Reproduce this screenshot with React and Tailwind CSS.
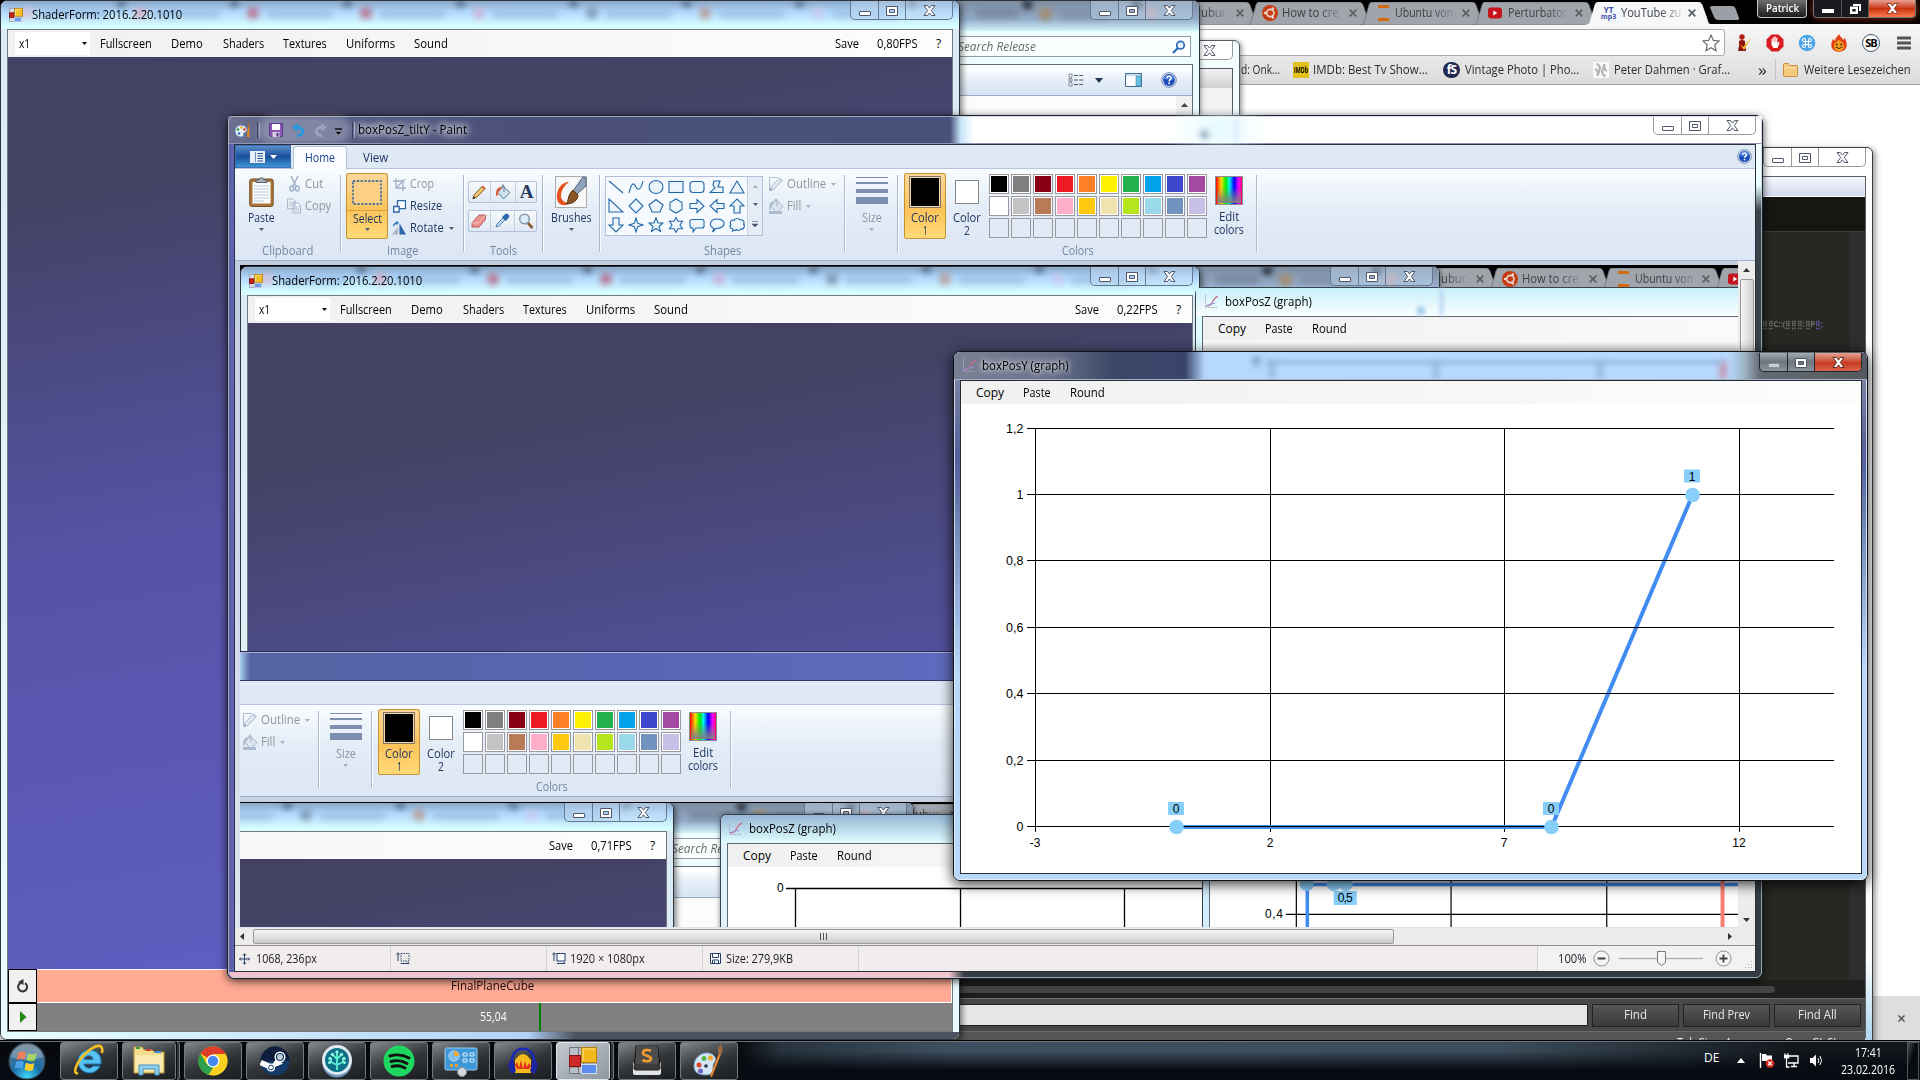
import React, { useLayoutEffect, useRef, useState } from "react";

/* Text squeezed or stretched to a given advance width. */
function T({ w, children, className = "" }) {
  const ref = useRef(null);
  const [s, setS] = useState(1);
  useLayoutEffect(() => {
    const n = ref.current.offsetWidth;
    if (n) setS(w / n);
  }, [w, children]);
  return (
    <span className={"inline-block shrink-0 whitespace-nowrap " + className} style={{ width: w }}>
      <span ref={ref} className="inline-block origin-left" style={{ transform: `scaleX(${s})` }}>
        {children}
      </span>
    </span>
  );
}

function Arrow({ className = "text-[#4a5b78]" }) {
  return (
    <svg className={"shrink-0 " + className} width="5" height="3" viewBox="0 0 5 3">
      <path d="M0 0h5L2.5 3z" fill="currentColor" />
    </svg>
  );
}

const glyphX = "M1 0h3.4L6.5 2.6 8.600 0H12L8.300 5 12 10H8.600L6.500 7.400 4.400 10H1l3.700-5z";

function WinButtons({ red = false, plain = false, className = "" }) {
  const box = plain
    ? "border-[#9a9a9a] bg-white"
    : red
    ? "border-[#20262e] bg-linear-to-b from-[#a3abb3] via-[#6d757d] to-[#8d969e]"
    : "border-[#65788f] bg-[#c4dbf2]/45";
  return (
    <div className={"flex h-[19px] w-[103px] shrink-0 overflow-hidden rounded-b-[5px] border border-t-0 " + box + " " + className}>
      <div className="flex w-[28px] justify-center border-r border-inherit pt-[10px]">
        <svg width="12" height="5" viewBox="0 0 12 5">
          <rect x=".5" y=".5" width="11" height="4" rx=".5" fill={red ? "#c9ced3" : "#fff"} stroke={red ? "#848b92" : "#50566c"} />
        </svg>
      </div>
      <div className="flex w-[27px] justify-center border-r border-inherit pt-[5px]">
        <svg width="12" height="10" viewBox="0 0 12 10">
          <path d="M.5.5h11v9H.5zM3.500 3.500v3h5v-3z" fill="#fff" fillRule="evenodd" stroke="#50566c" />
        </svg>
      </div>
      <div className={"flex flex-1 justify-center pt-[4px] " + (red ? "bg-linear-to-b from-[#e3a293] via-[#c63a20] via-55% to-[#d9644a]" : "")}>
        <svg width="13" height="11" viewBox="0 -0.5 13 11">
          <path d={glyphX} fill="#fff" stroke={red ? "#5e2a26" : "#50566c"} strokeWidth="1" />
        </svg>
      </div>
    </div>
  );
}

/* Windows Forms application icon */
function FormIcon({ size = 16 }) {
  return (
    <svg width={size} height={size} viewBox="0 0 16 16" className="shrink-0">
      <rect x=".5" y=".5" width="6" height="15" fill="#d8dde6" stroke="#9aa5b5" />
      <rect x="6.500" y=".5" width="9" height="9" fill="#f4c02a" stroke="#b97c06" />
      <rect x=".5" y="5.500" width="5" height="5.500" fill="#c8201c" stroke="#7d1210" />
      <rect x="6.500" y="10.500" width="7.500" height="5" fill="#6d9cf0" stroke="#c0cbe0" />
      <path d="M7.500 8.500v-7h7" stroke="#fbe28c" fill="none" />
    </svg>
  );
}

function GraphIcon() {
  return (
    <svg width="14" height="14" viewBox="0 0 14 14" className="shrink-0">
      <path d="M1.500 0v12.500H14" stroke="#a9a9b4" fill="none" strokeDasharray="1.500 1" />
      <path d="M2 11c5 0 5-2 7-5s2-4 5-5" stroke="#c76a86" fill="none" strokeWidth="1.200" />
      <path d="M2 10.500c4-.5 5-2 9-2" stroke="#8a9be8" fill="none" />
    </svg>
  );
}

/* Out-of-focus browser tabs seen through the title bar glass */
function GlassTabs() {
  const blobs = ["bg-[#e3b9cc]", "bg-[#dba3b4]", "bg-[#b9566c]", "bg-[#b9566c]", "bg-[#d3a9d0]", "bg-[#6f86a0]", "bg-[#b98d7c]", "bg-[#cfc6ee]"];
  return (
    <div className="absolute inset-x-0 top-0 h-[27px] overflow-hidden">
      <div className="ml-[20px] flex w-[1000px] blur-[3px]">
        {blobs.map((b, i) => (
          <div key={i} className="flex w-[113px] shrink-0 items-start">
            <div className={"mt-[6px] h-[12px] w-[12px] rounded-full opacity-75 " + b} />
            <div className="mt-[9px] ml-[8px] h-[8px] w-[65px] bg-[#86a9d6] opacity-50" />
            <div className="ml-[11px] h-[6px] w-[9px] rounded-b-full bg-[#24384f] opacity-70" />
          </div>
        ))}
      </div>
    </div>
  );
}

function ShaderWindow({ fps }) {
  return (
    <div className="absolute top-0 left-0 flex h-[1040px] w-[960px] flex-col rounded-[7px] border border-[#30343c] bg-linear-to-b from-[#dbe9f6] to-[#eafcff] shadow-[2px_2px_6px_#0008]">
      <div className="relative flex h-[28px] shrink-0 items-center rounded-t-[6px] bg-linear-to-b from-[#8eaccb] from-5% via-[#aed5fb] via-35% to-[#d8ffff] to-90% pl-[8px]">
        <GlassTabs />
        <div className="relative flex items-center gap-[9px]">
          <FormIcon size={14} />
          <T w={150} className="text-black">ShaderForm: 2016.2.20.1010</T>
        </div>
        <WinButtons className="relative ml-auto mr-[6px] self-start" />
      </div>
      <div className="mr-[6px] ml-[6px] flex h-[1003px] flex-col border border-[#6d7b7b] bg-white">
        <div className="flex h-[27px] shrink-0 items-center bg-linear-to-r from-[#f0f0f0] to-[#fdfdfd] text-black">
          <div className="ml-[7px] flex h-[23px] w-[75px] items-center justify-between bg-white pr-[3px] pl-[4px]">
            <T w={11}>x1</T>
            <Arrow className="text-black" />
          </div>
          <div className="ml-[10px] flex gap-[19.250px]">
            <T w={52}>Fullscreen</T>
            <T w={32}>Demo</T>
            <T w={41}>Shaders</T>
            <T w={44}>Textures</T>
            <T w={49}>Uniforms</T>
            <T w={34}>Sound</T>
          </div>
          <div className="ml-auto flex gap-[18px] pr-[11px]">
            <T w={24}>Save</T>
            <T w={41}>{fps}</T>
            <T w={5}>?</T>
          </div>
        </div>
        <div className="h-[912px] shrink-0 bg-[linear-gradient(170deg,#434264_0%,#434264_14%,#4c4a84_30%,#5553a5_47%,#5c5ab8_75%,#6161c8_100%)]" />
        <div className="flex h-[34px] shrink-0">
          <div className="flex w-[29px] items-center justify-center border border-black bg-[#f0f0f0]">
            <svg width="13" height="14" viewBox="0 0 13 14">
              <path d="M4.500 4a4.500 4.500 0 1 0 4.500.2" fill="none" stroke="#333" strokeWidth="2" />
              <path d="M2 3L7.500 0v6z" fill="#333" />
            </svg>
          </div>
          <div className="flex flex-1 items-center justify-center border-y border-r border-white bg-[#ffaa94] text-[#1c0c0c]">
            <T w={83} className="mr-[3px]">FinalPlaneCube</T>
          </div>
        </div>
        <div className="flex h-[28px] shrink-0">
          <div className="flex w-[29px] items-center justify-center border border-black bg-[#f0f0f0]">
            <svg width="8" height="12" viewBox="0 0 8 12"><path d="M1 0l6.500 6L1 12z" fill="#1f8a10" /></svg>
          </div>
          <div className="flex flex-1 items-center bg-[#808080] text-white">
            <T w={27} className="ml-[443px]">55,04</T>
            <div className="ml-[32px] h-full w-[2px] bg-[#008000]" />
          </div>
        </div>
      </div>
      <div className="flex-1 rounded-b-[6px] bg-linear-to-r from-[#e8ffff] via-[#b2d2f6] via-55% to-[#4a525e] to-60%" />
    </div>
  );
}

function HelpIcon({ size = 15 }) {
  return (
    <svg width={size} height={size} viewBox="0 0 16 16" className="shrink-0">
      <circle cx="8" cy="8" r="7.300" fill="#d9e4f5" stroke="#6f86ad" />
      <circle cx="8" cy="8" r="5.900" fill="#1b4bb8" />
      <path d="M2.500 7a5.700 5.700 0 0 1 11 0c-3 1.500-7 1-11 0z" fill="#5a8fe6" opacity=".7" />
      <path d="M5.900 6.200c.1-2.800 4.400-2.600 4.200 0-.1 1.400-2 1.400-2 3.200" fill="none" stroke="#fff" strokeWidth="1.500" />
      <rect x="7.200" y="10.500" width="1.700" height="1.700" fill="#fff" />
    </svg>
  );
}

function ExplorerWindow() {
  return (
    <div className="absolute top-0 left-[900px] flex h-[400px] w-[300px] flex-col rounded-t-[7px] border border-[#30343c] bg-[#eefdff] shadow-[1px_1px_5px_#0006]">
      <div className="relative flex h-[30px] shrink-0 overflow-hidden rounded-t-[6px] bg-linear-to-b from-[#7e8da0] via-[#93abc8] via-60% to-[#d0f4fb]">
        <div className="absolute inset-0 blur-[3px]">
          <div className="flex items-start">
            <div className="mt-[8px] ml-[75px] h-[8px] w-[42px] bg-[#75879d]" />
            <div className="ml-[5px] h-[8px] w-[9px] rounded-b-full bg-[#141b26]" />
            <div className="mt-[7px] ml-[7px] h-[12px] w-[13px] rounded-full bg-[#a38b6c]" />
            <div className="mt-[9px] ml-[8px] h-[8px] w-[50px] bg-[#7e90a8]" />
            <div className="ml-[22px] h-[8px] w-[9px] rounded-b-full bg-[#141b26]" />
            <div className="mt-[6px] ml-[4px] h-[12px] w-[12px] rounded-full bg-[#c89aa0]" />
          </div>
        </div>
        <WinButtons className="relative mr-[6px] ml-auto" />
      </div>
      <div className="mt-[5px] mr-[8px] flex h-[21px] shrink-0 items-center justify-between border border-[#8d9ba6] bg-white/80 pr-[4px] pl-[56px] text-[#6b6b6b] italic">
        <T w={78}>Search Release</T>
        <svg width="14" height="14" viewBox="0 0 14 14">
          <circle cx="8.500" cy="5.200" r="3.800" fill="#e4f2ff" stroke="#2c68b4" strokeWidth="1.700" />
          <path d="M5.600 8.200L1 13" stroke="#2c68b4" strokeWidth="2.200" />
        </svg>
      </div>
      <div className="mt-[7px] mr-[6px] flex flex-1 flex-col border-t border-r border-[#5d6c78]">
        <div className="flex h-[30px] shrink-0 items-center justify-end bg-linear-to-b from-white from-10% via-[#e6eff9] via-50% to-[#d7e3f3] pr-[15px]">
          <svg width="16" height="14" viewBox="0 0 16 14">
            <path d="M6 2.500h10M6 7h10M6 11.500h10" stroke="#4c5a6c" strokeDasharray="4 1.200" />
            <path d="M1 1h3v3H1zM1 5.500h3v3H1zM1 10h3v3H1z" fill="#fff" stroke="#66758a" strokeWidth=".8" />
            <path d="M2 6.500h1v1H2z" fill="#c33" />
          </svg>
          <svg className="ml-[11px]" width="8" height="5" viewBox="0 0 8 5"><path d="M0 0h8L4 5z" fill="#1d3350" /></svg>
          <svg className="ml-[22px]" width="17" height="14" viewBox="0 0 17 14">
            <path d="M.5.5h16v13H.5z" fill="#fff" stroke="#3f6d96" />
            <path d="M1 1h15v2H1z" fill="#c9dcec" />
            <path d="M11 3h5v10h-5z" fill="#67bfe0" stroke="#3f8fb8" strokeWidth=".6" />
          </svg>
          <div className="ml-[19px]"><HelpIcon size={16} /></div>
        </div>
        <div className="flex flex-1 justify-end border-t border-[#98a9c2] bg-[#fcfcfc]">
          <div className="flex w-[16px] justify-center bg-[#f0f0f0] pt-[7px]">
            <svg width="7" height="4" viewBox="0 0 7 4"><path d="M0 4L3.500 0 7 4z" fill="#444" /></svg>
          </div>
        </div>
      </div>
    </div>
  );
}

function TabShape({ active = false }) {
  return (
    <svg className="absolute top-[2px] -left-[6px]" width="128" height="23" viewBox="0 0 128 23">
      <path d="M0 23c4 0 4-3 5-6L9 3c1-2.500 2-3 4-3h98c3 0 4 1 5 3l5 14c1 3 1 6 6 6z" fill={active ? "#f6f7f8" : "#a0a5ac"} stroke={active ? "#fff" : "#6f747b"} strokeWidth=".8" />
    </svg>
  );
}

function UbuntuIcon() {
  return (
    <svg width="16" height="16" viewBox="0 0 16 16">
      <circle cx="8" cy="8" r="8" fill="#c63b12" />
      <circle cx="8.300" cy="8" r="3.600" fill="none" stroke="#e8d5cc" strokeWidth="1.700" />
      <circle cx="3" cy="8" r="1.300" fill="#e8d5cc" />
      <circle cx="10.800" cy="3.600" r="1.300" fill="#e8d5cc" />
      <circle cx="10.800" cy="12.400" r="1.300" fill="#e8d5cc" />
    </svg>
  );
}

function Tab({ icon, label, w, active }) {
  return (
    <div className={"relative h-[25px] w-[113px] shrink-0 " + (active ? "z-10" : "")}>
      <TabShape active={active} />
      <div className="relative flex h-[26px] items-center pl-[9px] text-[#3d4146]">
        <div className="flex w-[20px] shrink-0">{icon}</div>
        <T w={w} className="[mask-image:linear-gradient(90deg,#000_65%,#0003)]">{label}</T>
        <svg className="absolute top-[9px] left-[96px]" width="8" height="8" viewBox="0 0 8 8">
          <path d="M.7.700l6.600 6.600M7.300.700L.7 7.300" stroke="#5c5f63" strokeWidth="1.700" />
        </svg>
      </div>
    </div>
  );
}

function ChromeWindow() {
  return (
    <div className="absolute top-0 left-0 isolate flex h-[1040px] w-[1920px] flex-col bg-white">
      <div className="flex h-[24px] shrink-0 bg-black pl-[1140px]">
        <Tab icon={null} w={57} label="ow to ubur" />
        <Tab icon={<UbuntuIcon />} w={57} label="How to cre" />
        <Tab
          icon={<svg width="12" height="16" viewBox="0 0 12 16" className="ml-[3px]"><path d="M0 0h11v3H0zM0 13h11v3H0z" fill="#d4690c" /></svg>}
          w={58}
          label="Ubuntu von"
        />
        <Tab
          icon={<svg width="14" height="12" viewBox="0 0 14 12"><rect width="14" height="11" y=".5" rx="3" fill="#c4161c" /><path d="M5.300 3.500v5l4-2.500z" fill="#fff" /></svg>}
          w={59}
          label="Perturbator"
        />
        <Tab
          active
          icon={
            <div className="flex w-[15px] flex-col items-center text-[8px] leading-[7px] font-bold text-[#3c50b4]">
              <span>YT</span><span className="text-[7px]">mp3</span>
            </div>
          }
          w={60}
          label="YouTube zu"
        />
        <svg className="mt-[6px] ml-[4px] shrink-0" width="31" height="14" viewBox="0 0 31 14">
          <path d="M1 1.500Q1 0 3 0h20c2 0 3 1 3.500 2.500L30 12c.3 1 0 2-2 2H10c-3 0-4-1-5-3z" fill="#9ba0a7" />
        </svg>
        <div className="ml-[17px] flex h-[18px] w-[50px] shrink-0 items-center justify-center rounded-b-[4px] border border-t-0 border-[#c8c8c8] bg-linear-to-b from-[#707070] to-[#1c1c1c] pb-[1px] text-white">
          <T w={33} className="text-[11px] font-semibold">Patrick</T>
        </div>
        <div className="ml-[6px] flex h-[18px] w-[103px] shrink-0 overflow-hidden rounded-b-[4px] border border-t-0 border-[#70757a] bg-[#181a1e] shadow-[0_0_8px_#ff4a1a88]">
          <div className="flex w-[28px] justify-center border-r border-[#55595e] pt-[9px]">
            <div className="h-[4px] w-[12px] bg-white" />
          </div>
          <div className="flex w-[27px] justify-center border-r border-[#55595e] pt-[4px]">
            <svg width="11" height="10" viewBox="0 0 11 10"><path d="M3 0h8v7H9V2H3zM0 2.500h8V10H0zM2.300 5v2.500h3.400V5z" fill="#fff" fillRule="evenodd" /></svg>
          </div>
          <div className="flex flex-1 justify-center bg-linear-to-b from-[#e8a08c] via-[#c8300f] via-50% to-[#ff7a4a] pt-[3px]">
            <svg width="13" height="11" viewBox="0 -0.5 13 11"><path d={glyphX} fill="#fff" stroke="#7c2412" strokeWidth=".8" /></svg>
          </div>
        </div>
      </div>
      <div className="flex h-[61px] shrink-0 flex-col border-b border-[#a3a3a3] bg-linear-to-b from-[#f7f7f7] to-[#dcdcdc]">
        <div className="mt-[5px] flex h-[27px] items-center">
          <div className="flex h-full w-[1725px] items-center justify-end rounded-[3px] border border-[#a9a9a9] bg-white pr-[4px]">
            <svg width="18" height="18" viewBox="0 0 18 18"><path d="M9 1l2.400 5.400 5.700.6-4.300 3.900 1.200 5.800L9 13.800 4 16.700l1.200-5.800L.9 7l5.700-.6z" fill="#fff" stroke="#6b6b6b" strokeWidth="1.200" /></svg>
          </div>
          <div className="ml-[9px] flex items-center gap-[14px]">
            <svg width="18" height="18" viewBox="0 0 18 18"><circle cx="8" cy="3" r="2.700" fill="#b41c14" /><path d="M5 7q3-2 6 0v2l1 8H4l1-5z" fill="#8e130f" /><path d="M5 9l4 4 8-9-7 12z" fill="#f6b52c" /></svg>
            <svg width="18" height="18" viewBox="0 0 18 18"><path d="M5.500.5h7l5 5v7l-5 5h-7l-5-5v-7z" fill="#d81c20" /><path d="M5.500 5q.8-1 1.400 0V3.500q.9-1 1.500 0V3q.9-1 1.500 0v1q.9-1 1.500 0v5.500l1-1.500q1.200-.3 1.200.5L11.500 14h-4L5.500 11z" fill="#fff" /><path d="M6.900 4.500V8M8.400 3.500V8M9.900 3.500V8" stroke="#d81c20" strokeWidth=".4" /></svg>
            <svg width="18" height="18" viewBox="0 0 18 18"><circle cx="9" cy="9" r="8.300" fill="#4fa8ea" /><path d="M7.500 7.500h3v3h-3zM7.500 7.500H6A1.500 1.500 0 1 1 7.500 6zM10.500 7.500V6A1.500 1.500 0 1 1 12 7.500zM10.500 10.500H12a1.500 1.500 0 1 1-1.500 1.500zM7.500 10.500V12A1.500 1.500 0 1 1 6 10.500z" fill="none" stroke="#fff" strokeWidth="1.100" /></svg>
            <svg width="18" height="18" viewBox="0 0 18 18"><path d="M9 0c1 3 4 4 4 6l2-2c2 5 2 8 1 10-2 5-12 5-14 0-1-2-1-5 1-9l2 2c0-3 2-4 4-7z" fill="#e23f12" /><path d="M9 6c4 2 5 4 5 7s-3 4-5 4-5-1-5-4 1-5 5-7z" fill="#fba01c" /><circle cx="6.800" cy="10.500" r="1" fill="#421" /><circle cx="11.200" cy="10.500" r="1" fill="#421" /><path d="M5.500 13q3.500 3 7 0" stroke="#421" fill="none" /></svg>
            <div className="flex h-[18px] w-[18px] items-center justify-center rounded-full border border-[#40566c] bg-white text-[11px] font-bold tracking-[-1px] text-black">SB</div>
            <svg className="ml-[3px]" width="14" height="14" viewBox="0 0 14 14"><path d="M0 2h14M0 7h14M0 12h14" stroke="#555" strokeWidth="3" /></svg>
          </div>
        </div>
        <div className="flex h-[28px] items-center pl-[1241px] text-[#2b2b2b]">
          <T w={39}>d: Onk...</T>
          <div className="ml-[13px] flex h-[16px] w-[16px] items-center justify-center bg-[#e3c11c]"><T w={14} className="text-[8px] font-bold text-black">IMDb</T></div>
          <T w={115} className="ml-[4px]">IMDb: Best Tv Show...</T>
          <div className="ml-[15px] flex h-[16px] w-[17px] items-center justify-center rounded-full bg-[#232a52] text-[12px] font-bold tracking-[-1px] text-white">fS</div>
          <T w={114} className="ml-[5px]">Vintage Photo | Pho...</T>
          <svg className="ml-[14px]" width="16" height="16" viewBox="0 0 16 16"><rect width="16" height="16" fill="#fafafa" /><path d="M3.500 1.500q5 3 2.500 8l-1.500 4M2 7q3.500 1 2.500 7M12.500 14.500q-5-3-2.500-8L11.500 2M14 9q-3.500-1-2.500-7" stroke="#b4b4b4" strokeWidth="2.200" fill="none" /></svg>
          <T w={116} className="ml-[5px]">Peter Dahmen · Graf...</T>
          <T w={9} className="ml-[28px] text-[16px]">»</T>
          <div className="ml-[8px] h-[22px] w-px bg-[#c4c4c4]" />
          <svg className="ml-[7px]" width="15" height="14" viewBox="0 0 15 14"><path d="M.5 1.500Q.5.500 1.500.500h4l1.500 2h6.500q1 0 1 1v9q0 1-1 1h-12q-1 0-1-1z" fill="#f7c97c" stroke="#c98b3c" /><path d="M1 5h13" stroke="#fde6b6" /></svg>
          <T w={107} className="ml-[6px]">Weitere Lesezeichen</T>
        </div>
      </div>
      <div className="flex-1" />
      <div className="flex h-[44px] shrink-0 items-center justify-end bg-[#dedede] pr-[15px] text-[#555]">
        <span className="mr-[24px] pt-[8px]">..</span>
        <svg width="7" height="7" viewBox="0 0 7 7"><path d="M.5.500l6 6M6.500.500l-6 6" stroke="#555" strokeWidth="1.500" /></svg>
      </div>
    </div>
  );
}

function HiddenWindow() {
  return (
    <div className="absolute top-[40px] left-[1100px] flex h-[120px] w-[140px] flex-col rounded-t-[6px] border border-[#565c62] bg-[#f3ffff] shadow-[2px_1px_5px_#0006]">
      <WinButtons plain className="mr-[6px] ml-auto" />
      <div className="mt-[8px] mr-[6px] flex flex-1 flex-col border-t border-r border-[#555c60] bg-[#f2f2f2]">
        <div className="h-[19px] border-b border-[#d0d0d0] bg-linear-to-b from-[#f2f2f2] to-[#d2d2d2]" />
      </div>
    </div>
  );
}

function SublimeWindow() {
  return (
    <div className="absolute top-[147px] left-[900px] flex h-[900px] w-[973px] flex-col rounded-t-[6px] border border-[#3a3e42] bg-linear-to-b from-white from-90% to-[#a8d4ee] pr-[6px] shadow-[2px_2px_6px_#0007]">
      <WinButtons plain className="ml-auto" />
      <div className="mt-[9px] flex h-[862px] shrink-0 flex-col border-x border-t border-[#5b6066] bg-[#272822]">
        <div className="h-[20px] shrink-0 border-b border-[#fff] bg-linear-to-b from-[#f6f8fc] to-[#d3daed]" />
        <div className="h-[35px] shrink-0 border-b border-[#3c3d38] bg-[#161713]" />
        <div className="flex h-[748px] shrink-0 justify-end bg-[#272822]">
          <div className="mt-[88px] mr-[26px] text-[8px] leading-[8px] font-bold text-[#6f706a]"><T w={61}>⣿⣿C::(⣿⣿⣿:⣿P<span className="text-[#6a55a8]">⣿;</span></T></div>
          <div className="w-[16px] bg-[#2e2e2c]" />
        </div>
        <div className="flex h-[18px] shrink-0 items-center bg-[#1f1f1e]">
          <div className="h-[9px] w-[874px] rounded-full border border-[#1a1a1a] bg-[#444]" />
        </div>
        <div className="flex h-[34px] shrink-0 items-center gap-[4px] border-y border-[#6a6a6a] bg-[#484848] text-[#e8e8e8]">
          <div className="h-[22px] w-[686px] border border-[#222] bg-[#e6e6e6]" />
          <div className="flex h-[23px] w-[87px] items-center justify-center border border-[#222] bg-linear-to-b from-[#565656] to-[#3a3a3a]"><T w={23}>Find</T></div>
          <div className="flex h-[23px] w-[87px] items-center justify-center border border-[#222] bg-linear-to-b from-[#565656] to-[#3a3a3a]"><T w={47}>Find Prev</T></div>
          <div className="flex h-[23px] w-[87px] items-center justify-center border border-[#222] bg-linear-to-b from-[#565656] to-[#3a3a3a]"><T w={39}>Find All</T></div>
        </div>
        <div className="flex shrink-0 justify-end gap-[54px] bg-[#555] pt-[3px] pr-[26px] text-[#eee]">
          <T w={54}>Tab Size: 4</T>
          <T w={54}>OpenGL SL</T>
        </div>
      </div>
    </div>
  );
}

/* ---------- Paint ribbon ---------- */

const shapeIcons = [
  <path d="M1 2l14 12" />,
  <path d="M1 14C4 2 6 4 8 8s5 3 7-6" />,
  <ellipse cx="8" cy="8" rx="7" ry="6.500" />,
  <rect x="1" y="2.500" width="14" height="11" />,
  <rect x="1" y="2.500" width="14" height="11" rx="3" />,
  <path d="M5 2h6L9 8h5v5.500H1L6 9 4 6z" />,
  <path d="M8 2l7 12H1z" />,
  <path d="M1 1v13h14z" />,
  <path d="M8 1l7 7-7 7-7-7z" />,
  <path d="M8 1.500l7 5.500-3 7H4L1 7z" />,
  <path d="M8 1l6 3.500v7L8 15l-6-3.500v-7z" />,
  <path d="M1 5.500h7v-4L15 8l-7 6.500v-4H1z" />,
  <path d="M15 5.500H8v-4L1 8l7 6.500v-4h7z" />,
  <path d="M5 15V8H1l7-7 7 7h-4v7z" />,
  <path d="M5 1v7H1l7 7 7-7h-4V1z" />,
  <path d="M8 1l1.700 5.300L15 8l-5.300 1.700L8 15 6.300 9.700 1 8l5.300-1.700z" />,
  <path d="M8 1l2 5h5l-4 3.500 1.500 5L8 11.500l-4.500 3L5 9.500 1 6h5z" />,
  <path d="M8 .5l2 3.700h4.500L12 8l2.500 3.800H10l-2 3.700-2-3.700H1.500L4 8 1.500 4.200H6z" />,
  <path d="M3 2.500h10q2 0 2 2V9q0 2-2 2H7l-3 4v-4H3q-2 0-2-2V4.500q0-2 2-2z" />,
  <path d="M5 11.500C-1 9 1 2 8 2s9 5 5 8c-2 1.500-4 1.500-6 1.500L3.500 15z" />,
  <path d="M4 12c-3 0-4-3-2-4.500C0 5 3 2 5 3.500 6 1 10 1 11 3c3-1 5 2 3.500 4 2 2 0 6-3 5-1 2-3 2-4 .5C6 14 4 14 4 12zM3 15l1-2" />,
];

const swatches = [
  "bg-black", "bg-[#7f7f7f]", "bg-[#880015]", "bg-[#ed1c24]", "bg-[#ff7f27]", "bg-[#fff200]", "bg-[#22b14c]", "bg-[#00a2e8]", "bg-[#3f48cc]", "bg-[#a349a4]",
  "bg-white", "bg-[#c3c3c3]", "bg-[#b97a57]", "bg-[#ffaec9]", "bg-[#ffc90e]", "bg-[#efe4b0]", "bg-[#b5e61d]", "bg-[#99d9ea]", "bg-[#7092be]", "bg-[#c8bfe7]",
];

function Group({ label, lw, children, className }) {
  return (
    <>
      <div className={"flex shrink-0 flex-col pt-[4px] " + className}>
        <div className="flex h-[66px] shrink-0">{children}</div>
        <div className="flex h-[23px] shrink-0 items-center justify-center text-[#7486a3]">{label && <T w={lw}>{label}</T>}</div>
      </div>
      <div className="mt-[6px] h-[77px] w-[2px] shrink-0 border-r border-white bg-[#a9b8cf]" />
    </>
  );
}

function Small({ icon, label, w, off, arrow }) {
  return (
    <div className={"flex h-[22px] items-center gap-[4px] " + (off ? "text-[#8f959f]" : "text-[#1e3560]")}>
      <span className={"flex w-[14px] justify-center " + (off ? "opacity-80" : "")}>{icon}</span>
      <T w={w}>{label}</T>
      {arrow && <Arrow className={off ? "ml-[1px] text-[#a5afbf]" : "ml-[1px] text-[#4a5b78]"} />}
    </div>
  );
}

const pencil = (off) => (
  <svg width="16" height="16" viewBox="0 0 16 16" className="shrink-0">
    {off && <path d="M10 1.500H1.500V14" fill="none" stroke="#9fb0c6" />}
    <path d="M2 14.500l1.300-4L11.500 2l2.700 2.700-8.400 8.400z" fill={off ? "#dfe7f1" : "#f4c66b"} stroke={off ? "#8fa3bd" : "#7d5a2c"} />
    <path d="M10.500 3l1.500-1.500 2.700 2.700-1.500 1.500z" fill={off ? "#b4c2d4" : "#d56a5c"} />
    <path d="M1.500 15l1-3 2 2z" fill={off ? "#7f93ad" : "#333"} />
  </svg>
);
const bucket = (off) => (
  <svg width="16" height="16" viewBox="0 0 16 16" className="shrink-0">
    <path d="M8 2l7 6.500-6.500 6.500L3 8.500z" fill={off ? "#dbe4ef" : "#cfe0f1"} stroke={off ? "#8fa3bd" : "#5d7898"} />
    <path d="M9 8V1.500Q8 0 7 1.500V4" fill="none" stroke={off ? "#8fa3bd" : "#6b7f96"} />
    <path d="M7 3C2 3 1 6 1 11c1 2 2 1 2-1 0-2 0-3 2-4z" fill={off ? "#a4b4c9" : "#e0562c"} />
    {off && <path d="M1 13h13v3H1z" fill="#9fb0c6" />}
  </svg>
);

function Ribbon() {
  return (
    <div className="flex h-[116px] shrink-0 flex-col">
      <div className="flex h-[24px] shrink-0 items-start border-b border-[#b5c4dc] bg-[#dfe8f5]">
        <div className="flex h-[23px] w-[56px] items-center justify-center gap-[5px] border border-[#3d6fb6] bg-linear-to-b from-[#5b8ecb] via-[#1c4f9c] via-50% to-[#3f97d4]">
          <svg width="15" height="12" viewBox="0 0 15 12"><rect width="15" height="12" fill="#e9f0f9" /><path d="M7.500 2.500h5.500M7.500 5h5.500M7.500 7.500h5.500M7.500 10h5.500" stroke="#24508f" /><path d="M5.500 1v10" stroke="#6f8db8" /></svg>
          <svg width="7" height="4" viewBox="0 0 7 4"><path d="M0 0h7L3.500 4z" fill="#fff" /></svg>
        </div>
        <div className="mt-px ml-[2px] flex h-[23px] w-[54px] items-center justify-center rounded-t-[3px] border border-b-0 border-[#b5c4dc] bg-[#fafcff] text-[#1e3f8a]"><T w={30}>Home</T></div>
        <div className="flex h-[25px] items-center pl-[16px] text-[#1e3560]"><T w={25}>View</T></div>
        <div className="mt-[4px] mr-[3px] ml-auto"><HelpIcon size={15} /></div>
      </div>
      <div className="flex h-[92px] border-b border-[#9eb0cc] bg-linear-to-b from-[#f9fcff] via-[#e3ecf7] via-45% to-[#dce6f4]">
        <Group label="Clipboard" lw={51} className="w-[105px]">
          <div className="flex w-[53px] flex-col items-center pt-[3px] text-[#1e3560]">
            <svg width="25" height="31" viewBox="0 0 25 31">
              <rect x=".7" y="3" width="23.500" height="27.500" rx="2" fill="#a9743a" stroke="#7d5220" />
              <rect x="3.500" y="6" width="18" height="21.500" fill="#fbfdff" />
              <path d="M5 10h15M5 13h15M5 16h15M5 19h15M5 22h15M5 25h10" stroke="#b9c6d8" />
              <path d="M7 6.500V4h3q2.500-5 5 0h3v2.500z" fill="#aab3bd" stroke="#5a646f" />
            </svg>
            <T w={27} className="mt-[3px] leading-[16px]">Paste</T>
            <Arrow className="mt-[2px] text-[#4a5b78]" />
          </div>
          <div className="-ml-px">
            <Small off w={18} label="Cut" icon={<svg width="11" height="16" viewBox="0 0 11 16"><path d="M2 0l5 10M9 0L4 10" stroke="#8fa3bd" strokeWidth="1.600" /><ellipse cx="2.800" cy="12.500" rx="1.900" ry="2.400" fill="none" stroke="#8fa3bd" strokeWidth="1.500" /><ellipse cx="8.200" cy="12.500" rx="1.900" ry="2.400" fill="none" stroke="#8fa3bd" strokeWidth="1.500" /></svg>} />
            <Small off w={26} label="Copy" icon={<svg width="15" height="16" viewBox="0 0 15 16"><path d="M.5.500h6l2 2V11h-8zM6.500 4.500h5l3 3v8h-8z" fill="#eef3f9" stroke="#8fa3bd" /><path d="M2 4h4M2 6h4M2 8h4M8 9h5M8 11h5M8 13h5" stroke="#a9b8cc" /></svg>} />
          </div>
        </Group>
        <Group label="Image" lw={31} className="w-[121px]">
          <div className="ml-[4px] flex h-[66px] w-[42px] flex-col items-center rounded-[2px] border border-[#c4932c] bg-linear-to-b from-[#fbd79a] via-[#fdc45a] via-55% to-[#ffd978] text-[#1e3560]">
            <svg className="mt-[6px]" width="30" height="25" viewBox="0 0 30 25"><rect x="1" y="1" width="28" height="23" fill="#fbcf86" stroke="#1f5aa0" strokeWidth="1.400" strokeDasharray="2.400 1.400" /></svg>
            <div className="mt-[5px] h-px w-full bg-[#d9a03c]" />
            <T w={29} className="leading-[15px]">Select</T>
            <Arrow className="mt-[2px] text-[#4a5b78]" />
          </div>
          <div className="pl-[4px]">
            <Small off w={24} label="Crop" icon={<svg width="13" height="13" viewBox="0 0 13 13"><path d="M3 0v10h10M0 3h10v10M3 10l9-9" stroke="#8fa3bd" strokeWidth="1.300" fill="none" /></svg>} />
            <Small w={32} label="Resize" icon={<svg width="13" height="13" viewBox="0 0 13 13"><path d="M4.500.700h8v8h-8z" fill="#fff" stroke="#2a66a8" strokeWidth="1.300" /><path d="M.7 6.500h5.500v5.500H.7z" fill="#fff" stroke="#2a66a8" strokeWidth="1.300" /></svg>} />
            <Small arrow w={34} label="Rotate" icon={<svg width="15" height="14" viewBox="0 0 15 14"><path d="M0 14L6.500 6v8z" fill="#aeb6c2" /><path d="M8 14V2l7 12z" fill="#2a66a8" /><path d="M1.500 5q1-3.500 4-3.500M4.500 0l2 1.500-2 1.800" stroke="#2a7ac0" fill="none" strokeWidth="1.200" /></svg>} />
          </div>
        </Group>
        <Group label="Tools" lw={27} className="w-[77px]">
          <div className="ml-[3px] flex flex-col gap-[7px] pt-[8px]">
            <div className="flex h-[22px] w-[69px] items-center justify-around rounded-[2px] border border-[#b2c2da] bg-linear-to-b from-[#f7fafd] to-[#dfe8f4]">
              {pencil(false)}
              <div className="h-full w-px bg-[#c3d0e3]" />
              {bucket(false)}
              <div className="h-full w-px bg-[#c3d0e3]" />
              <span className="w-[15px] text-center font-['Liberation_Serif',serif] text-[19px] leading-[20px] font-bold text-[#243a5e]">A</span>
            </div>
            <div className="flex h-[22px] w-[69px] items-center justify-around rounded-[2px] border border-[#b2c2da] bg-linear-to-b from-[#f7fafd] to-[#dfe8f4]">
              <svg width="16" height="14" viewBox="0 0 16 14"><path d="M1 9l7-8h7l-1 5-6 7H1z" fill="#e9938c" stroke="#b6605c" /><path d="M1 9h6l8-8" fill="none" stroke="#f8c4be" /></svg>
              <div className="h-full w-px bg-[#c3d0e3]" />
              <svg width="16" height="16" viewBox="0 0 16 16"><path d="M2 14l1-3 6-6 2 2-6 6z" fill="#bcd8f0" stroke="#5d84ad" /><path d="M8 4l4-3.500q3 .5 3.500 3L12 8z" fill="#2768b0" /></svg>
              <div className="h-full w-px bg-[#c3d0e3]" />
              <svg width="16" height="16" viewBox="0 0 16 16"><path d="M9 9l5.500 6" stroke="#8a5a34" strokeWidth="2.600" /><circle cx="6.500" cy="6" r="4.800" fill="#d9edfb" stroke="#8b97a5" strokeWidth="1.500" /></svg>
            </div>
          </div>
        </Group>
        <Group className="w-[55px]">
          <div className="flex w-full flex-col items-center pt-[3px] pr-px text-[#1e3560]">
            <svg width="32" height="32" viewBox="0 0 32 32">
              <rect x=".5" y=".5" width="31" height="31" fill="#f8f8f8" stroke="#a9adb3" />
              <path d="M14 6c-4 3-8 8-8 14 0 4 3 7 9 7-6 4-12 2-13-4C1 14 6 6 14 6z" fill="#e8501c" />
              <path d="M28 1l3 1v8l-9 8-4-3z" fill="#8fa5bf" stroke="#4b5c70" />
              <path d="M18 14l5 5c0 5-5 9-12 9 3-2 1-9 7-14z" fill="#8a5526" stroke="#5d3714" />
            </svg>
            <T w={41} className="mt-[2px] leading-[16px]">Brushes</T>
            <Arrow className="mt-[2px] text-[#4a5b78]" />
          </div>
        </Group>
        <Group label="Shapes" lw={37} className="w-[243px]">
          <div className="mt-[3px] ml-[4px] flex h-[60px] w-[158px] shrink-0 border border-[#b0c0d8] bg-[#f6f9fd]">
            <div className="grid w-[141px] grid-cols-7 place-items-center">
              {shapeIcons.map((s, i) => (
                <svg key={i} width="16" height="16" viewBox="0 0 16 16" fill="#eef6fd" stroke="#2268a8" strokeWidth="1.100">{s}</svg>
              ))}
            </div>
            <div className="flex flex-1 flex-col items-center justify-around border-l border-[#c5d1e2] bg-[#e6edf6]">
              <svg width="5" height="3" viewBox="0 0 5 3"><path d="M0 3h5L2.500 0z" fill="#a5afbf" /></svg>
              <Arrow />
              <svg width="6" height="6" viewBox="0 0 6 6"><path d="M0 .5h6M0 3h6L3 6z" fill="#4a5b78" stroke="#4a5b78" strokeWidth=".6" /></svg>
            </div>
          </div>
          <div className="pl-[6px]">
            <Small off arrow w={39} label="Outline" icon={pencil(true)} />
            <Small off arrow w={14} label="Fill" icon={bucket(true)} />
          </div>
        </Group>
        <Group className="w-[51px]">
          <div className="flex w-full flex-col items-center text-[#8f959f]">
            <div className="flex h-[37px] w-[32px] flex-col pt-[4px]">
              <div className="h-px bg-[#7c8fb0]" />
              <div className="mt-[4px] h-[2px] bg-[#7c8fb0]" />
              <div className="mt-[5px] h-[4px] bg-[#7c8fb0]" />
              <div className="mt-[4px] h-[7px] bg-[#7c8fb0]" />
            </div>
            <T w={20} className="leading-[16px]">Size</T>
            <Arrow className="mt-[2px] text-[#a5afbf]" />
          </div>
        </Group>
        <Group label="Colors" lw={32} className="w-[357px]">
          <div className="ml-[5px] flex h-[66px] w-[42px] shrink-0 flex-col items-center rounded-[2px] border border-[#c4932c] bg-linear-to-b from-[#fbd79a] via-[#fdc45a] via-55% to-[#ffd978] text-[#1e3560]">
            <div className="mt-[2px] h-[32px] w-[32px] border border-[#80746a] bg-black outline-1 -outline-offset-2 outline-[#f6d9a0]" />
            <T w={28} className="mt-[3px] leading-[13px]">Color</T>
            <T w={5} className="leading-[13px]">1</T>
          </div>
          <div className="flex w-[41px] shrink-0 flex-col items-center text-[#1e3560]">
            <div className="mt-[7px] h-[24px] w-[24px] border border-[#868686] bg-white" />
            <T w={28} className="mt-[7px] leading-[13px]">Color</T>
            <T w={6} className="leading-[13px]">2</T>
          </div>
          <div className="mt-[1px] ml-[2px] grid h-[64px] w-[218px] shrink-0 grid-cols-10 gap-[2px]">
            {Array.from({ length: 30 }, (_, i) => (
              <div key={i} className="h-[20px] w-[20px] border border-[#9a9a9e]">
                {i < 20 && <div className={"h-full w-full border border-white " + swatches[i]} />}
              </div>
            ))}
          </div>
          <div className="flex w-[43px] shrink-0 flex-col items-center text-[#1e3560]">
            <div className="mt-[3px] flex h-[29px] w-[28px] border border-[#8d8d8d] bg-[linear-gradient(to_right,#f00,#fd0_20%,#0e0_38%,#0ee_52%,#00f_70%,#f0f_88%,#f06)] p-px">
              <div className="h-full w-full bg-linear-to-b from-transparent from-35% to-[#808080]" />
            </div>
            <T w={20} className="mt-[5px] leading-[13px]">Edit</T>
            <T w={30} className="leading-[13px]">colors</T>
          </div>
        </Group>
      </div>
    </div>
  );
}

/* ---------- windows inside the painted picture ---------- */

function GraphMenu() {
  return (
    <div className="flex h-[23px] shrink-0 items-center gap-[19px] bg-linear-to-r from-[#f0f0f0] to-[#fdfdfd] pl-[15px] text-black">
      <T w={28}>Copy</T>
      <T w={28}>Paste</T>
      <T w={35}>Round</T>
    </div>
  );
}

function CanvasPicture() {
  return (
    <div className="relative h-[662px] w-[1498px] shrink-0 overflow-hidden border-t border-black bg-white">
      <ChromeWindow />
      <ExplorerWindow />
      <ShaderWindow fps="0,22FPS" />
      <div className="absolute top-[21px] left-[955px] flex h-[400px] w-[700px] flex-col rounded-tl-[7px] border border-[#39424c] bg-linear-to-r from-[#e0fbff] to-white">
        <div className="flex h-[28px] shrink-0 items-center gap-[7px] bg-linear-to-b from-[#c8f0fa] to-[#fafeff] pl-[8px]">
          <GraphIcon />
          <T w={87} className="text-black">boxPosZ (graph)</T>
          <div className="ml-[98px] h-[10px] w-[8px] self-end rounded-full bg-[#a4cdf0] blur-[2px]" />
          <div className="ml-[8px] h-full w-[3px] bg-[#b4cdf5] blur-[2px]" />
        </div>
        <div className="ml-[6px] flex flex-1 flex-col border-t border-l border-[#5d6a72] bg-white">
          <GraphMenu />
          <div className="h-[15px] bg-linear-to-b from-white to-[#d8d8d8]" />
        </div>
      </div>
      {/* lower slice: a nested Paint window scrolled to the left */}
      <div className="absolute top-[385px] left-0 flex h-[280px] w-[1498px] flex-col border-t border-[#2c2a50]">
        <div className="h-[29px] shrink-0 border-y border-t-[#aab0dc] border-b-[#34366a] bg-[linear-gradient(to_right,#a9cdf0_0,#5563a2_10px,#5965b4_400px,#5f6cc0_800px)]" />
        <div className="relative h-[121px] shrink-0 overflow-hidden bg-[#c9d2e3]">
          <div className="ml-[-531px] w-[2100px]"><Ribbon /></div>
        </div>
        <div className="relative flex-1 overflow-hidden border-t border-black">
          <div className="absolute top-[-1px] left-[-526px] h-[400px] w-[1920px]">
            <ChromeWindow />
            <ExplorerWindow />
            <ShaderWindow fps="0,71FPS" />
          </div>
          <div className="absolute top-[11px] left-[480px] flex h-[400px] w-[500px] flex-col rounded-t-[7px] border border-[#39424c] bg-[#dff4fd] shadow-[0_0_5px_#0007]">
            <div className="flex h-[28px] shrink-0 items-center gap-[7px] rounded-t-[6px] bg-linear-to-b from-[#94b5d6] to-[#e2ffff] pl-[7px]">
              <GraphIcon />
              <T w={87} className="text-black">boxPosZ (graph)</T>
            </div>
            <div className="mx-[6px] flex flex-1 flex-col border border-[#5d6a72] bg-white">
              <GraphMenu />
              <svg width="480" height="60" viewBox="0 0 480 60" className="shrink-0">
                <path d="M58 21.500h422M67.500 21v40M232.500 21v40M396.500 21v40" stroke="#000" strokeWidth="1.300" />
                <text x="49" y="25" fontSize="12" fontFamily="Liberation Sans">0</text>
              </svg>
            </div>
          </div>
          <div className="absolute top-[10px] left-[962px] flex h-[400px] w-[560px] border-l border-[#39424c] bg-[#d3ecfb] pl-[6px]">
            <svg width="530" height="120" viewBox="0 0 530 120" className="border-l border-[#5d6a72] bg-white">
              <path d="M76 101.500h454M86.500 60v60M241.500 60v60M397.500 60v60" stroke="#000" strokeWidth="1.200" />
              <path d="M97.500 120V71.500H530" fill="none" stroke="#418cf0" strokeWidth="3.500" />
              <rect x="511.500" y="0" width="4" height="120" fill="#fa8072" />
              <g fill="#87cefa"><circle cx="97" cy="71" r="7" /><circle cx="124" cy="71" r="7" /><circle cx="136" cy="71" r="7" /><rect x="124" y="78" width="23" height="14" /></g>
              <g fontSize="12" fontFamily="Liberation Sans"><text x="128" y="89.500" textLength="15">0,5</text><text x="55" y="105" textLength="18">0,4</text></g>
            </svg>
          </div>
        </div>
      </div>
    </div>
  );
}

function QuickAccess() {
  return (
    <div className="flex h-[28px] shrink-0 items-center border-b border-[#8f95b5] bg-[linear-gradient(to_right,#6b7090_0,#535a80_120px,#4a5079_300px,#49517a_722px,#c8e6fa_733px,#fff_746px)] pl-[6px]">
      <svg width="17" height="16" viewBox="0 0 17 16" className="shrink-0">
        <path d="M1 9c0-7 10-8 12-2 1 3-2 3-3 4s1 4-3 4C3 15 1 12 1 9z" fill="#e6eff8" stroke="#5d88b5" />
        <circle cx="4" cy="7.500" r="1.300" fill="#2c9a3c" /><circle cx="7.500" cy="5.500" r="1.300" fill="#f2b01c" /><circle cx="10.500" cy="7.500" r="1.300" fill="#d43c24" /><circle cx="5" cy="11.500" r="1.300" fill="#3a6cd0" />
        <path d="M14 5l-1 10h2.500L15 5z" fill="#ee8a1c" /><path d="M13.500 5q-.5-3 1-5 1.500 2 1 5z" fill="#a0683c" />
      </svg>
      <div className="ml-[6px] h-[16px] w-[3px] border-x border-x-[#a0a5bc] border-l-[#32365a]" />
      <div className="ml-[3px] flex h-[20px] items-center rounded-full bg-[#c9cce0]/35 px-[6px] shadow-[0_0_6px_4px_#c9cce055]">
        <svg width="14" height="14" viewBox="0 0 14 14"><path d="M.5.500h13v13H2l-1.500-1.500z" fill="#8a57b8" stroke="#603a88" /><rect x="3" y="1" width="8" height="6" fill="#fff" /><rect x="3.500" y="9" width="7" height="5" fill="#d5cfe0" /><rect x="7.500" y="10" width="2" height="3.500" fill="#553378" /></svg>
        <svg className="ml-[9px]" width="13" height="14" viewBox="0 0 13 14"><path d="M5 12.500c7 0 8-7.500 1-8H3" fill="none" stroke="#2a96dc" strokeWidth="3" /><path d="M0 4.500L6 0v9z" fill="#2a96dc" /></svg>
        <svg className="ml-[9px]" width="13" height="14" viewBox="0 0 13 14"><path d="M8 12.500c-7 0-8-7.500-1-8h3" fill="none" stroke="#98a4bb" strokeWidth="3" /><path d="M13 4.500L7 0v9z" fill="#98a4bb" /></svg>
        <svg className="mt-[4px] ml-[8px]" width="7" height="8" viewBox="0 0 7 8"><path d="M0 1h7" stroke="#000" strokeWidth="1.300" /><path d="M0 3.500h7L3.500 7z" fill="#000" stroke="#fff" strokeWidth=".3" /></svg>
      </div>
      <div className="ml-[4px] h-[16px] w-[3px] border-x border-x-[#a0a5bc] border-l-[#32365a]" />
      <T w={109} className="ml-[3px] text-black [text-shadow:0_0_6px_#fff,0_0_10px_#fff,0_0_12px_#fff]">boxPosZ_tiltY - Paint</T>
      <div className="ml-auto flex h-full pr-[6px]">
        <div className="mr-[385px] flex h-full gap-[26px] bg-linear-to-r from-transparent via-[#e6fbff] to-transparent px-[30px] blur-[3px]">
          <div className="mt-[14px] h-[9px] w-[9px] rounded-full bg-[#8fa5bd]" />
          <div className="h-full w-[3px] bg-[#cfe0fa]" />
        </div>
        <WinButtons plain />
      </div>
    </div>
  );
}

function StatusBar() {
  return (
    <div className="flex h-[26px] shrink-0 items-center border-t border-[#8b8d90] bg-[#f1edec] text-[#1d1d28]">
      <div className="flex h-full w-[156px] items-center gap-[6px] border-r border-[#d4d2d2] pl-[4px]">
        <svg width="11" height="12" viewBox="0 0 11 12"><path d="M5.500 1v10M.5 6h10M4 2.500L5.500.700 7 2.500M4 9.500l1.500 1.800L7 9.500M2 4.500L.5 6 2 7.500M9 4.500L10.500 6 9 7.500" stroke="#24406a" fill="none" /></svg>
        <T w={61}>1068, 236px</T>
      </div>
      <div className="flex h-full w-[156px] items-center border-r border-[#d4d2d2] pl-[5px]">
        <svg width="14" height="13" viewBox="0 0 14 13"><path d="M2 1v8M.5 2.500L2 .7l1.500 1.800" stroke="#24406a" fill="none" /><rect x="5" y="1.500" width="8" height="7.500" fill="none" stroke="#24406a" strokeDasharray="1.500 1" /><path d="M5 11.500h8M11.500 10l1.800 1.500" stroke="#24406a" /></svg>
      </div>
      <div className="flex h-full w-[156px] items-center gap-[4px] border-r border-[#d4d2d2] pl-[5px]">
        <svg width="14" height="13" viewBox="0 0 14 13"><path d="M2 1v8M.5 2.500L2 .7l1.500 1.800" stroke="#24406a" fill="none" /><rect x="5" y="1.500" width="8" height="7.500" fill="#fff" stroke="#24406a" /><path d="M5 11.500h8M11.500 10l1.800 1.500" stroke="#24406a" /></svg>
        <T w={75}>1920 × 1080px</T>
      </div>
      <div className="flex h-full w-[156px] items-center gap-[5px] border-r border-[#d4d2d2] pl-[7px]">
        <svg width="11" height="11" viewBox="0 0 11 11"><path d="M.5.500h10v10h-10z" fill="#fff" stroke="#24406a" /><path d="M2.500.500v4h6v-4M2.500 10.500V7h6v3.500M4.500 8v2" stroke="#24406a" fill="none" /></svg>
        <T w={67}>Size: 279,9KB</T>
      </div>
      <div className="ml-auto flex h-full w-[218px] items-center border-l border-[#d4d2d2] bg-[#f3f1f1] pl-[20px]">
        <T w={29}>100%</T>
        <svg className="ml-[6px]" width="17" height="17" viewBox="0 0 17 17"><circle cx="8.500" cy="8.500" r="7.500" fill="#f5f5f5" stroke="#8d8d8d" /><path d="M4.500 8.500h8" stroke="#444" strokeWidth="2" /></svg>
        <div className="ml-[9px] flex h-[15px] w-[84px] items-center justify-center bg-linear-to-b from-transparent from-42% via-[#a9adb0] via-50% to-transparent to-58%">
          <svg width="9" height="15" viewBox="0 0 9 15"><path d="M.5.500h8v11l-4 3-4-3z" fill="#f6f6f6" stroke="#777" /></svg>
        </div>
        <svg className="ml-[12px]" width="17" height="17" viewBox="0 0 17 17"><circle cx="8.500" cy="8.500" r="7.500" fill="#f5f5f5" stroke="#8d8d8d" /><path d="M4.500 8.500h8M8.500 4.500v8" stroke="#444" strokeWidth="1.800" /></svg>
        <svg className="mt-[12px] mr-[2px] ml-auto" width="9" height="9" viewBox="0 0 9 9"><path d="M7 1h1v1H7zM4 4h1v1H4zM7 4h1v1H7zM1 7h1v1H1zM4 7h1v1H4zM7 7h1v1H7z" fill="#a5a5a5" /></svg>
      </div>
    </div>
  );
}

function PaintWindow() {
  return (
    <div className="absolute top-[115px] left-[227px] flex h-[864px] w-[1536px] flex-col rounded-[7px] border border-[#1c2028] bg-[linear-gradient(to_right,#5b609a_0,#6266c4_8px,transparent_8px),linear-gradient(to_bottom,#fff_0,#e8ffff_8%,#38444a_11%,#343c42_100%)] shadow-[0_2px_9px_#000b] outline-1 -outline-offset-2 outline-[#c7cfe0]/70">
      <QuickAccess />
      <div className="mr-[6px] ml-[6px] flex h-[828px] shrink-0 flex-col border border-[#2a3040] bg-[#c9d2e3]">
        <Ribbon />
        <div className="flex h-[667px] shrink-0">
          <div className="flex w-[1503px] shrink-0 bg-linear-to-b from-[#c3cde0] to-[#dce4f2] pt-[4px] pl-[5px]">
            <CanvasPicture />
          </div>
          <div className="flex flex-1 flex-col items-center bg-[#ececec] pt-[7px]">
            <svg width="7" height="4" viewBox="0 0 7 4"><path d="M0 4L3.500 0 7 4z" fill="#333" /></svg>
            <div className="mt-[7px] h-[400px] w-[14px] rounded-[2px] border border-[#999] bg-linear-to-r from-[#f4f4f4] to-[#d0d0d0]" />
            <svg className="mt-auto mb-[6px]" width="7" height="4" viewBox="0 0 7 4"><path d="M0 0L3.500 4 7 0z" fill="#333" /></svg>
          </div>
        </div>
        <div className="flex h-[17px] shrink-0 items-center bg-[#ececec]">
          <svg className="ml-[5px]" width="4" height="7" viewBox="0 0 4 7"><path d="M4 0L0 3.500 4 7z" fill="#333" /></svg>
          <div className="ml-[9px] flex h-[15px] w-[1141px] items-center justify-center gap-[2px] rounded-[2px] border border-[#999] bg-linear-to-b from-[#f4f4f4] via-[#e2e2e4] via-50% to-[#cacacd]">
            <i className="h-[7px] w-px bg-[#555]" /><i className="h-[7px] w-px bg-[#555]" /><i className="h-[7px] w-px bg-[#555]" />
          </div>
          <svg className="mr-[23px] ml-auto" width="4" height="7" viewBox="0 0 4 7"><path d="M0 0l4 3.500L0 7z" fill="#333" /></svg>
        </div>
        <StatusBar />
      </div>
      <div className="mx-px flex-1 rounded-b-[6px] bg-[linear-gradient(to_right,#f0c2d0_0,#f3c5cd_720px,#343c42_735px)]" />
    </div>
  );
}

/* ---------- front graph window ---------- */

function Chart() {
  const ys = [428.5, 494.500, 560.500, 627.500, 693.500, 760.500, 826.500];
  const yl = ["1,2", "1", "0,8", "0,6", "0,4", "0,2", "0"];
  const xs = [1035.5, 1270.500, 1504.500, 1739.500];
  const xl = ["-3", "2", "7", "12"];
  return (
    <svg width="900" height="469" viewBox="961 404 900 469" className="shrink-0 bg-white">
      {xs.map((x) => <path key={x} d={`M${x} 428V832`} stroke="#000" />)}
      <path d="M1176 827H1551.500L1692.500 495" fill="none" stroke="#418cf0" strokeWidth="4" strokeLinejoin="round" />
      {ys.map((y) => <path key={y} d={`M1027 ${y}H1834`} stroke="#000" />)}
      <g fill="#87cefa">
        <circle cx="1176.500" cy="827" r="7.300" /><circle cx="1551.500" cy="827" r="7.300" /><circle cx="1692.500" cy="495" r="7.300" />
        <rect x="1168" y="802" width="16" height="13" /><rect x="1543" y="802" width="16" height="13" /><rect x="1684" y="469.500" width="16" height="13" />
      </g>
      <g fontSize="12" fontFamily="Liberation Sans" fill="#000">
        {yl.map((t, i) => <text key={t} x="1023.500" y={ys[i] + 4.500} textAnchor="end" fontSize="12.500">{t}</text>)}
        {xl.map((t, i) => <text key={t} x={xs[i] - 0.500} y="847" textAnchor="middle" fontSize="12">{t}</text>)}
        <g textAnchor="middle">
          <text x="1176" y="813">0</text><text x="1551" y="813">0</text><text x="1692" y="480.500">1</text>
        </g>
      </g>
    </svg>
  );
}

function GraphWindow() {
  return (
    <div className="absolute top-[351px] left-[953px] flex h-[530px] w-[915px] flex-col rounded-[7px] border border-[#10141a] bg-[linear-gradient(to_bottom,#8a90a8_0,#53609a_20%,#b8d8fa_60%,#b8d8fa_100%)] shadow-[0_3px_14px_#000c] outline-1 -outline-offset-2 outline-[#eaf2fa]/80">
      <div className="relative h-[28px] shrink-0 overflow-hidden rounded-t-[6px] border-b border-[#a5b0c4] bg-[linear-gradient(to_right,#7a8093_0,#69718a_100px,#3b4666_160px,#38446a_231px,#b5d8fc_251px,#b5d8fc_776px,#9db2c4_791px,#656b72_806px,#555a60_100%)]">
        <div className="absolute inset-0 flex items-end blur-[3px]">
          <div className="mb-[14px] ml-[299px] h-[8px] w-[7px] bg-[#7596ba]" />
          <div className="ml-[10px] h-[18px] w-[4px] bg-[#86a8cc]" />
          <div className="ml-[160px] h-[18px] w-[4px] bg-[#86a8cc]" />
          <div className="ml-[160px] h-[18px] w-[4px] bg-[#86a8cc]" />
          <div className="ml-[118px] h-[18px] w-[6px] bg-[#c98aa2]" />
        </div>
        <div className="absolute top-[9px] left-[313px] h-[3px] w-[455px] bg-[#8fb2d8] blur-[2px]" />
        <div className="relative flex h-full items-center pt-px pl-[8px]">
          <GraphIcon />
          <T w={87} className="ml-[6px] text-black [text-shadow:0_0_5px_#fff,0_0_9px_#fffc]">boxPosY (graph)</T>
          <WinButtons red className="mr-[5px] ml-auto self-start" />
        </div>
      </div>
      <div className="mr-[5px] ml-[6px] flex h-[494px] shrink-0 flex-col border border-[#242b36] bg-white">
        <GraphMenu />
        <Chart />
      </div>
    </div>
  );
}

/* ---------- taskbar ---------- */

const taskIcons = [
  <svg width="32" height="34" viewBox="0 0 32 34"><path d="M16 6A11.500 11.500 0 1 0 27 22h-7c-2 3.500-8.500 2.500-9-2h17C29 11 23.500 6 16 6zm-5 9.500c1-5 8.500-5 9 0z" fill="#56c0f2" stroke="#1479b8" fillRule="evenodd" /><path d="M5 29C-1 31 3 18 13 9S31-1 29 9" fill="none" stroke="#f5c021" strokeWidth="2.600" /></svg>,
  <svg width="32" height="30" viewBox="0 0 32 30"><path d="M1 4V1h8l2 3h8l2 2h10v21H1z" fill="#f3dd8e" stroke="#c09c40" /><path d="M3 2h4" stroke="#2ca23c" strokeWidth="2" /><path d="M13 4h5" stroke="#d8402c" strokeWidth="2" /><path d="M22 6h6" stroke="#3c8cd8" strokeWidth="2" /><path d="M2 9h28v16H2z" fill="#f9eab0" /><path d="M6 29V19h20v10h-4v-6H10v6z" fill="#8fd0ee" stroke="#4a94bc" /></svg>,
  <svg width="30" height="30" viewBox="0 0 30 30"><circle cx="15" cy="15" r="14.500" fill="#fcd01e" /><path d="M15 15L2.500 7.500A14.500 14.500 0 0 1 27.700 8H15z" fill="#e03c2c" /><path d="M2.500 7.500L9 18.500l6 3-4.500 7.500A14.500 14.500 0 0 1 2.500 7.500z" fill="#2ea14c" /><path d="M27.700 8H15l6 10.500L15 29.500A14.500 14.500 0 0 0 27.700 8z" fill="#fcd01e" /><circle cx="15" cy="15" r="6.500" fill="#fff" /><circle cx="15" cy="15" r="5.200" fill="#4688f1" /></svg>,
  <svg width="30" height="30" viewBox="0 0 30 30"><circle cx="15" cy="15" r="14.500" fill="#143a68" /><path d="M.5 15a14.500 14.500 0 0 1 29 0z" fill="#0f1e3c" /><path d="M.7 16.500l10 4.500" fill="none" stroke="#fff" strokeWidth="5.500" /><path d="M11 21.500l6-8 4 4z" fill="#fff" stroke="#fff" strokeWidth="2" /><circle cx="11" cy="21.500" r="4" fill="#fff" /><circle cx="11" cy="21.500" r="2.400" fill="none" stroke="#143a68" /><circle cx="20" cy="11" r="5.500" fill="#fff" /><circle cx="20" cy="11" r="3.500" fill="#c4ced8" stroke="#143a68" strokeWidth="1.200" /></svg>,
  <svg width="32" height="34" viewBox="0 0 32 34"><circle cx="16" cy="19" r="14.500" fill="#6f93ba" /><circle cx="16" cy="16" r="15" fill="#dfeaf5" /><circle cx="16" cy="16" r="12" fill="#0e7088" /><path d="M16 26V9M16 21l-6-3v-4M16 21l6-3v-4M16 15l-4-4M16 15l4-4" stroke="#5ff0d0" strokeWidth="1.800" fill="none" /><g fill="#8ff5de"><circle cx="16" cy="8" r="1.700" /><circle cx="11.500" cy="10.500" r="1.700" /><circle cx="20.500" cy="10.500" r="1.700" /><circle cx="9" cy="14.500" r="1.700" /><circle cx="23" cy="14.500" r="1.700" /><circle cx="8.500" cy="18.500" r="1.500" /><circle cx="23.500" cy="18.500" r="1.500" /></g></svg>,
  <svg width="32" height="32" viewBox="0 0 32 32"><circle cx="16" cy="16" r="15.500" fill="#1ed760" /><path d="M7 11q10-3 19 2M8 16.500q9-2.500 16 2M9 21.500q7-2 13 1.500" fill="none" stroke="#111" strokeWidth="2.900" strokeLinecap="round" /></svg>,
  <svg width="34" height="32" viewBox="0 0 34 32"><rect x="1" y="3" width="32" height="22" rx="1.500" fill="#3e98d8" stroke="#9ccbee" /><circle cx="10" cy="11" r="5" fill="#bfe0f8" stroke="#e8f4fd" /><path d="M10 6v5h5a5 5 0 1 1-5-5z" fill="#3e98d8" opacity=".5" /><path d="M10 11V6a5 5 0 0 1 5 5z" fill="#f5a52c" /><path d="M19 8h4v3h-4zM26 8h4v3h-4zM19 14h4v3h-4zM26 14h4v3h-4z" fill="#3e98d8" stroke="#d7ecfb" /><path d="M6 19h3v3H6zM11 19h3v3h-3z" fill="#f2a028" /><circle cx="18" cy="27" r="4.500" fill="#d3d8de" stroke="#8b9198" /></svg>,
  <svg width="30" height="30" viewBox="0 0 30 30"><path d="M7 27V14q8-12 16 0v13z" fill="#f6ba1c" /><path d="M4 17C2-2 28-2 26 17" fill="none" stroke="#1c28b8" strokeWidth="2.500" /><path d="M1 16l4-3 3 12-4 3q-5-6-3-12zM29 16l-4-3-3 12 4 3q5-6 3-12z" fill="#1a26a4" /><path d="M7 19l2-3 2 6 2-8 2 9 2-8 2 6 2-4 2 3-2 3H9z" fill="#e2301c" /></svg>,
  <svg width="30" height="30" viewBox="0 0 30 30"><path d="M1.500 1.500h9v26h-9zM1.500 21h9M10.500 1.500h5v26h-5" fill="#b9c0c8" stroke="#6d747b" /><rect x="1.500" y="9.500" width="11" height="11" fill="#cc2a26" stroke="#8c1210" /><rect x="13.500" y="1.500" width="15" height="15" fill="#f2b81c" stroke="#b98208" /><rect x="13.500" y="18.500" width="15" height="9" fill="#5e8df0" stroke="#cfdcf6" /><path d="M15 15V3h12" stroke="#fbe08a" fill="none" /></svg>,
  <svg width="30" height="34" viewBox="0 0 30 34"><rect x="1" y="18" width="28" height="13" rx="2" fill="#e2e2e2" /><path d="M4 2h22l2 22q0 2-2 2H4q-2 0-2-2z" fill="#3c3c3c" stroke="#1c1c1c" /><rect x="4" y="2" width="22" height="18" rx="1.500" fill="#4c4c4c" /><path d="M19 7c-4-2-8-1-8 2 0 3.500 8 2 8 5.500 0 3-5 3.500-8.500 1.500" fill="none" stroke="#f29b30" strokeWidth="2.600" /></svg>,
  <svg width="34" height="34" viewBox="0 0 34 34"><path d="M2 22C2 9 18 5 23 13c2 4-2 6-2 9s1 9-7 9C6 31 2 28 2 22z" fill="#d3e6f4" stroke="#6f9cc0" /><circle cx="7" cy="21" r="2.500" fill="#e04428" /><circle cx="12" cy="14.500" r="2.500" fill="#56b848" /><circle cx="18.500" cy="14" r="2.500" fill="#f4a62c" /><circle cx="8.500" cy="27" r="2.500" fill="#6c62c0" /><circle cx="14" cy="22" r="1.800" fill="#26323c" /><path d="M18 32L27 9l2 1-9 23z" fill="#e8872c" /><path d="M26 10Q25 4 29 0q3 5 0 11z" fill="#9b6a42" /></svg>,
];

function Taskbar() {
  return (
    <div className="absolute top-[1040px] left-0 flex h-[40px] w-[1920px] items-center border-t border-[#000] bg-[linear-gradient(to_bottom,#66727e_0,#66727e_1px,transparent_1px),linear-gradient(to_right,#07090c_0,#07090c_738px,#27333e_780px,#3f5160_960px,#3c4d5b_1500px,#12161b_1800px)]">
      <div className="flex h-full w-full items-center bg-linear-to-b from-transparent from-25% to-[#070b12] to-75%">
        <svg className="ml-[8px] shrink-0" width="38" height="38" viewBox="0 0 38 38">
          <defs><radialGradient id="orb" cx=".5" cy=".95" r=".9"><stop offset="0" stopColor="#3fd8fa" /><stop offset=".45" stopColor="#1a6da8" /><stop offset="1" stopColor="#5c7488" /></radialGradient></defs>
          <circle cx="19" cy="19" r="18" fill="url(#orb)" stroke="#3a4856" />
          <path d="M10 11q4-3 8-.5L16.500 18q-4-2-8 .5z" fill="#e8562a" /><path d="M20 11q4 2.500 9 0L27 18.500q-4 2-8.500-.5z" fill="#8cc63c" /><path d="M8 20q4-2.500 8 0l-1.500 7q-4-2.500-8 0z" fill="#4aa2e8" /><path d="M18 20.500q4 2.500 8.500.5L25 28q-4.500 2-8.500-.5z" fill="#fccb2c" />
          <path d="M3 15a16.500 16.500 0 0 1 32 0q-15 6-32 0z" fill="#fff" opacity=".25" />
        </svg>
        <div className="ml-[14px] flex gap-[4px]">
          {taskIcons.map((ic, i) => (
            <div key={i} className="flex h-[38px] w-[58px]">
              <div className={"flex flex-1 items-center justify-center rounded-[3px] border " + (i === 8 ? "border-[#e2e6ea] bg-linear-to-br from-[#c4cacf] to-[#8e979f]" : "border-[#74797e] bg-linear-160 from-[#85898d] via-[#33373a] via-50% to-[#1a1c1f]")}>{ic}</div>
              {(i === 1 || i === 8) && <div className="ml-px h-full w-[3px] rounded-r-[3px] border border-l-0 border-[#74797e] bg-[#303336]" />}
            </div>
          ))}
        </div>
        <div className="ml-auto flex h-full items-center text-white">
          <T w={15} className="mb-[5px]">DE</T>
          <svg className="ml-[18px]" width="8" height="5" viewBox="0 0 8 5"><path d="M0 5L4 0l4 5z" fill="#fff" /></svg>
          <svg className="ml-[14px]" width="16" height="15" viewBox="0 0 16 15"><path d="M1.500 0v15" stroke="#fff" strokeWidth="1.400" /><path d="M3 1h4l1 1.500h5V9H8L7 8H3z" fill="#fff" /><circle cx="11" cy="10.500" r="4.300" fill="#d8281c" /><path d="M9.300 8.800l3.400 3.400M12.700 8.800l-3.400 3.400" stroke="#fff" strokeWidth="1.300" /></svg>
          <svg className="ml-[9px]" width="16" height="15" viewBox="0 0 16 15"><path d="M5 3h9v7H4M7 13.500h6M10 10v3M2.500 5v9h3" stroke="#fff" strokeWidth="1.300" fill="none" /><path d="M1 0v2M4 0v2M0 2h5v3H0z" stroke="#fff" fill="#fff" strokeWidth=".8" /></svg>
          <svg className="ml-[10px]" width="14" height="15" viewBox="0 0 14 15"><path d="M0 5h2.500L6 1.500v12L2.500 10H0z" fill="#fff" /><path d="M8 5q1.500 2.500 0 5M10 3q3 4.500 0 9" stroke="#fff" fill="none" /></svg>
          <div className="ml-[16px] flex w-[56px] flex-col items-center leading-[17px]">
            <T w={27}>17:41</T>
            <T w={54}>23.02.2016</T>
          </div>
          <div className="mr-px ml-[11px] h-[38px] w-[12px] border border-[#50565c] bg-linear-to-br from-[#4a4f55] to-[#0a0c0e] to-40%" />
        </div>
      </div>
    </div>
  );
}

export default function App() {
  return (
    <div className="relative h-[1080px] w-[1920px] overflow-hidden bg-white font-['Open_Sans','Noto_Sans',sans-serif] text-[12px] leading-[16px]">
      <ChromeWindow />
      <SublimeWindow />
      <HiddenWindow />
      <ExplorerWindow />
      <ShaderWindow fps="0,80FPS" />
      <PaintWindow />
      <GraphWindow />
      <Taskbar />
    </div>
  );
}
